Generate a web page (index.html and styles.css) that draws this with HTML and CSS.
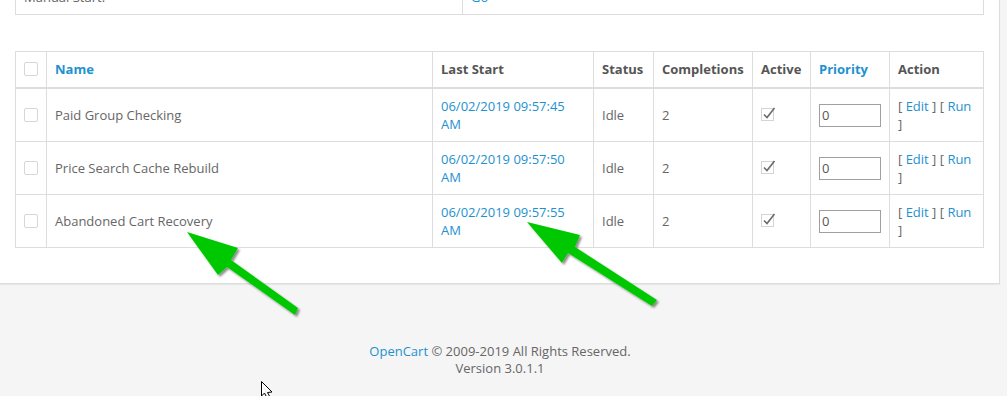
FILE: index.html
```html
<!DOCTYPE html>
<html lang="en">
<head>
  <meta charset="UTF-8">
  <title>Cron Jobs</title>
  <link rel="stylesheet" href="styles.css">
</head>
<body>
  <div class="page">
    <div class="panel">
      <table class="table top-table">
        <tr>
          <td class="label-cell">Manual Start:</td>
          <td><a href="#">Go</a></td>
        </tr>
      </table>

      <!-- Cron list -->
      <table class="table list">
        <thead>
          <tr>
            <th class="col-check"><span class="box"></span></th>
            <th class="col-name"><a href="#">Name</a></th>
            <th class="col-date">Last Start</th>
            <th class="col-status">Status</th>
            <th class="col-comp">Completions</th>
            <th class="col-active">Active</th>
            <th class="col-prio"><a href="#">Priority</a></th>
            <th class="col-action">Action</th>
          </tr>
        </thead>
        <tbody>
          <tr>
            <td><span class="box"></span></td>
            <td>Paid Group Checking</td>
            <td><a href="#">06/02/2019 09:57:45 AM</a></td>
            <td>Idle</td>
            <td>2</td>
            <td><span class="tick"><svg width="16" height="16" viewBox="0 0 16 16"><rect x="0.5" y="3.5" width="12" height="12" fill="#fff" stroke="#d4d4d4"/><path d="M3 9.5 L6 12.5 L13.5 3" fill="none" stroke="#6a6a6a" stroke-width="1.6"/></svg></span></td>
            <td><input class="prio" type="text" value="0"></td>
            <td>[ <a href="#">Edit</a> ] [ <a href="#">Run</a> ]</td>
          </tr>
          <tr>
            <td><span class="box"></span></td>
            <td>Price Search Cache Rebuild</td>
            <td><a href="#">06/02/2019 09:57:50 AM</a></td>
            <td>Idle</td>
            <td>2</td>
            <td><span class="tick"><svg width="16" height="16" viewBox="0 0 16 16"><rect x="0.5" y="3.5" width="12" height="12" fill="#fff" stroke="#d4d4d4"/><path d="M3 9.5 L6 12.5 L13.5 3" fill="none" stroke="#6a6a6a" stroke-width="1.6"/></svg></span></td>
            <td><input class="prio" type="text" value="0"></td>
            <td>[ <a href="#">Edit</a> ] [ <a href="#">Run</a> ]</td>
          </tr>
          <tr>
            <td><span class="box"></span></td>
            <td>Abandoned Cart Recovery</td>
            <td><a href="#">06/02/2019 09:57:55 AM</a></td>
            <td>Idle</td>
            <td>2</td>
            <td><span class="tick"><svg width="16" height="16" viewBox="0 0 16 16"><rect x="0.5" y="3.5" width="12" height="12" fill="#fff" stroke="#d4d4d4"/><path d="M3 9.5 L6 12.5 L13.5 3" fill="none" stroke="#6a6a6a" stroke-width="1.6"/></svg></span></td>
            <td><input class="prio" type="text" value="0"></td>
            <td>[ <a href="#">Edit</a> ] [ <a href="#">Run</a> ]</td>
          </tr>
        </tbody>
      </table>
    </div>

    <footer class="footer">
      <a href="#">OpenCart</a> &copy; 2009-2019 All Rights Reserved.<br>
      Version 3.0.1.1
    </footer>
  </div>

  <!-- annotation arrows and mouse pointer drawn over the screenshot -->
  <svg class="marks" width="1007" height="396" viewBox="0 0 1007 396">
    <defs>
      <filter id="shade" x="-20%" y="-20%" width="140%" height="140%">
        <feDropShadow dx="2" dy="2" stdDeviation="1.2" flood-color="#000" flood-opacity="0.45"/>
      </filter>
    </defs>
    <g fill="#00c800" filter="url(#shade)">
      <polygon points="187,232 238,248 231,260 298,308 295,315 227,267 218,275"/>
      <polygon points="527,222 580,235 575,247 657,300 652,306 568,253 562,263"/>
    </g>
    <path d="M261.5 381.5 L261.5 396 L264.5 393 L267 398 M261.5 381.5 L272 392 L267.5 392.5 L270 397" fill="#fff" stroke="#000" stroke-width="1"/>
  </svg>
</body>
</html>
```

FILE: styles.css
```css
/* General Layout */
body {
  margin: 0;
  background-color: #f5f5f5;
  font-family: "Open Sans", "DejaVu Sans", sans-serif;
  font-size: 13px;
  color: #666;
  overflow: hidden;
}

a {
  color: #1e91cf;
  text-decoration: none;
}

.page {
  width: 1000px;
}

.panel {
  margin-top: -21px;
  padding: 0 15px 15px 15px;
  background: #fff;
  border-right: 1px solid #ddd;
  border-bottom: 1px solid #ddd;
  box-shadow: 0 1px 1px rgba(0, 0, 0, 0.05);
}

/* Tables */
.table {
  width: 100%;
  border-collapse: collapse;
  font-size: 13px;
  line-height: 18px;
}

.table th,
.table td {
  border: 1px solid #ddd;
  padding: 8px;
  text-align: left;
  vertical-align: middle;
}

.top-table {
  margin-bottom: 36px;
}

.top-table .label-cell {
  width: 430px;
}

.list {
  margin-bottom: 20px;
}

.list th {
  font-weight: bold;
  color: #555;
  border-bottom-width: 2px;
  padding: 8px 8px 9px;
}

.list tbody td {
  height: 36px;
}

.col-check { width: 13px; }
.col-name { width: 369px; }
.col-date { width: 144px; }
.col-status { width: 43px; }
.col-comp { width: 82px; }
.col-active { width: 41px; }
.col-prio { width: 62px; }

.box {
  display: block;
  width: 12px;
  height: 12px;
  margin: 0;
  border: 1px solid #d6d6d6;
  border-radius: 2px;
  background: #fff;
}

.tick {
  display: block;
  width: 16px;
  height: 16px;
  margin-top: -4px;
}

.tick svg {
  display: block;
}

.prio {
  display: block;
  box-sizing: border-box;
  width: 62px;
  height: 23px;
  margin: 0;
  padding: 0 2px;
  border: 1px solid #a0a0a0;
  font-family: inherit;
  font-size: 13px;
  color: #555;
  background: #fff;
}

/* Footer */
.footer {
  padding-top: 59px;
  text-align: center;
  line-height: 17px;
}

/* Annotations */
.marks {
  position: absolute;
  top: 0;
  left: 0;
  pointer-events: none;
}
```
